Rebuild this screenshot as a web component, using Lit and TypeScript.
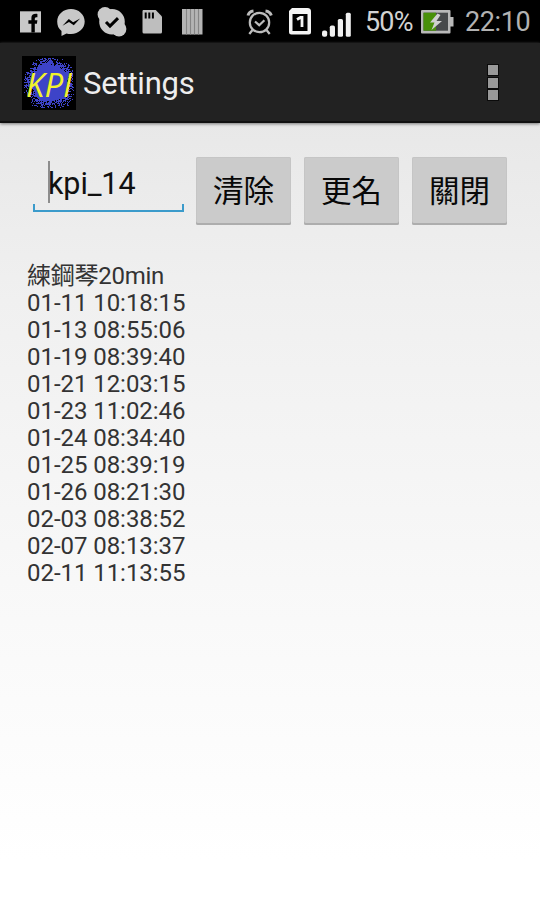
import { LitElement, html, css, svg } from "lit";
import { customElement, property } from "lit/decorators.js";

const records = [
  "01-11 10:18:15", "01-13 08:55:06", "01-19 08:39:40", "01-21 12:03:15",
  "01-23 11:02:46", "01-24 08:34:40", "01-25 08:39:19", "01-26 08:21:30",
  "02-03 08:38:52", "02-07 08:13:37", "02-11 11:13:55",
];

// Blue spray-paint blot with a speckled edge, on a black square.
function speckles(): string {
  let seed = 7;
  const rnd = () => (seed = (seed * 16807) % 2147483647) / 2147483647;
  let d = "";
  for (let y = 2; y < 52; y++) {
    for (let x = 2; x < 52; x++) {
      const dx = x - 27;
      const dy = y - 26.5;
      const wobble = 1 + 0.06 * Math.sin(Math.atan2(dy, dx) * 5 + 1);
      const r = (Math.hypot(dx, dy) / 25) * wobble;
      if (r < 0.74 || rnd() > (r - 0.64) * 2) d += `M${x} ${y}h1v1h-1z`;
    }
  }
  return d;
}

@customElement("status-bar")
export class StatusBar extends LitElement {
  static styles = css`
    :host { display: block; height: 43px; background: #000; position: relative; }
    svg { display: block; }
    .text { position: absolute; top: 6px; font: 27px/32px Roboto, sans-serif; white-space: nowrap; }
    .level { left: 365px; color: #d2d2d2; letter-spacing: -0.85px; }
    .clock { left: 465px; color: #b2b2b2; letter-spacing: -0.4px; }
  `;
  render() {
    return html`
      <svg width="540" height="43" viewBox="0 0 540 43">
        <rect x="20" y="11.3" width="21" height="21.2" fill="#c8c8c8" />
        <path d="M31.400 32.500v-8.700h-3v-3.600h3v-2.300c0-3.200 2-4.400 6-4v3.300c-2-.1-2.600.3-2.600 1.700v1.300h2.600l-.5 3.600h-2.100v8.700z" fill="#000" />
        <path d="M71 9c-7.700 0-13.800 5.500-13.800 12.500 0 4 1.300 7.200 4.300 9.500V36l5-2.600c1.200.4 3.100.5 4.500.5 7.600 0 13.700-5.400 13.700-12.400S78.600 9 71 9z" fill="#c8c8c8" />
        <path d="M62.500 25.700l6.300-6.700 4.300 3.300 7-3.800-6.300 6.700-4.800-3.200z" fill="#000" />
        <circle cx="112" cy="21.700" r="12.800" fill="#c9c9c9" />
        <circle cx="105" cy="14.500" r="7.400" fill="#c9c9c9" />
        <circle cx="119" cy="29" r="7.400" fill="#c9c9c9" />
        <path d="M106 22l4 4.100 8-8" fill="none" stroke="#000" stroke-width="3" />
        <path d="M143 10h12.700l6.300 6.500V32q0 1.500-1.500 1.500h-16.500q-1.500 0-1.500-1.500V11z" fill="#bebebe" />
        <path d="M145.700 12.500v6M149.300 12.500v6M152.900 12.500v6" stroke="#000" stroke-width="2" />
        <rect x="182" y="9" width="20.500" height="25.500" fill="#b4b4b4" />
        <path d="M186.500 9v25.500M190.500 9v25.500M194.500 9v25.500M198.500 9v25.500" stroke="#858585" stroke-width="1.100" />
        <g fill="none" stroke="#bcbcbc">
          <circle cx="259.500" cy="22.500" r="9.700" stroke-width="2.200" />
          <path d="M248 15.500q1-4 5.500-4.500M265.500 11q4.500.5 5.800 4.500" stroke-width="3" />
          <path d="M252.500 30l-3.200 4M266.500 30l3.200 4" stroke-width="2.300" />
          <path d="M255 21.500l4.200 3.700 5.200-5" stroke-width="2.200" />
        </g>
        <path d="M292 8h15.500q3.500 0 3.500 3.500V32q0 2.500-2.500 2.500H291.500q-2.500 0-2.500-2.500V11z" fill="#f4f4f4" />
        <rect x="292.500" y="14" width="15" height="17" fill="#000" />
        <path d="M297 19.500l3.500-2h1.500V27" fill="none" stroke="#f4f4f4" stroke-width="2.800" />
        <g fill="#f0f0f0">
          <rect x="322" y="30.500" width="5.200" height="6.300" rx="2" />
          <rect x="329.800" y="25.500" width="5.200" height="11.300" rx="1.800" />
          <rect x="337.800" y="19" width="5.200" height="17.800" rx="1.600" />
          <rect x="345.800" y="12.700" width="5" height="24.100" rx="1.500" />
        </g>
        <rect x="421" y="10" width="29.500" height="23.500" rx="1" fill="#b9b9b9" />
        <rect x="450" y="17" width="3.500" height="9.500" fill="#b9b9b9" />
        <rect x="423.500" y="12.700" width="24.500" height="18" fill="#47494b" />
        <rect x="423.500" y="12.700" width="12.500" height="18" fill="#489009" />
        <path d="M437.500 13.500l-7.500 9h4.500L431.500 30l10.500-9h-5.500l4-6z" fill="#d0d0d0" />
      </svg>
      <span class="text level">50%</span>
      <span class="text clock">22:10</span>
    `;
  }
}

@customElement("action-bar")
export class ActionBar extends LitElement {
  static styles = css`
    :host { display: flex; align-items: center; box-sizing: border-box; height: 80px; padding: 1px 42px 0 22px;
      background: #222; border-bottom: 2px solid #111; position: relative; box-shadow: 0 1px 3px #777; }
    .logo { display: block; flex: none; }
    .mark { font: italic 32px "Open Sans", "Noto Sans", sans-serif; }
    .title { flex: 1; margin-left: 7px; padding-top: 2px; font: 31px/38px Roboto, sans-serif; color: #eee; letter-spacing: -0.2px; }
    .more { display: flex; flex-direction: column; gap: 2.5px; }
    .dot { width: 10px; height: 10px; background: #999; box-shadow: 0 0 0 1px #0b0b0b; }
  `;
  render() {
    return html`
      <svg class="logo" width="54" height="54" viewBox="0 0 54 54">
        <rect width="54" height="54" fill="#000" />
        ${svg`<path d=${speckles()} fill="#3d43c8" />`}
        <text class="mark" x="4" y="40.500" textLength="46" lengthAdjust="spacingAndGlyphs" fill="#f1f22c">KPI</text>
      </svg>
      <span class="title">Settings</span>
      <div class="more"><i class="dot"></i><i class="dot"></i><i class="dot"></i></div>
    `;
  }
}

@customElement("holo-button")
export class HoloButton extends LitElement {
  @property() label = "";
  static styles = css`
    :host { display: block; }
    .face { box-sizing: border-box; display: block; width: 95px; height: 68px; padding: 0 0 4px; border: 0; border-radius: 2px;
      background: #cbcbcb; box-shadow: inset 0 -2px 0 #adadad, inset 0 0 0 1px #c5c5c5;
      font: 30.500px/38px "Noto Sans CJK TC", sans-serif; color: #080808; }
  `;
  render() {
    return html`<button class="face">${this.label}</button>`;
  }
}

@customElement("app-root")
export class AppRoot extends LitElement {
  static styles = css`
    :host { display: flex; flex-direction: column; height: 900px; overflow: hidden;
      background: linear-gradient(#e8e8e8 120px, #f0f0f0 300px, #f8f8f8 580px, #fff 860px); }
    .controls { display: flex; gap: 13px; padding: 34px 0 0 33px; }
    .field { box-sizing: border-box; width: 151px; height: 55px; margin-right: -1px; padding: 5px 0 0 15px; position: relative;
      font: 30.500px/44px Roboto, sans-serif; color: #111; letter-spacing: -0.1px; }
    .field::before { content: ""; position: absolute; left: 15px; top: 4px; width: 2px; height: 42px; background: #8d8d8d; }
    .field::after { content: ""; position: absolute; inset: auto 0 0 0; height: 6px; border: 2px solid #3b9bcb; border-top: 0; }
    .log { margin: 38px 0 0 27px; font: 24px/27px Roboto, "Noto Sans CJK TC", sans-serif; color: #333; letter-spacing: -0.05px; }
    .heading { height: 27px; letter-spacing: -0.25px; }
    .row { height: 27px; white-space: nowrap; }
  `;
  render() {
    return html`
      <status-bar></status-bar>
      <action-bar></action-bar>
      <div class="controls">
        <div class="field">kpi_14</div>
        <holo-button label="清除"></holo-button>
        <holo-button label="更名"></holo-button>
        <holo-button label="關閉"></holo-button>
      </div>
      <div class="log">
        <div class="heading">練鋼琴20min</div>
        ${records.map((r) => html`<div class="row">${r}</div>`)}
      </div>
    `;
  }
}
